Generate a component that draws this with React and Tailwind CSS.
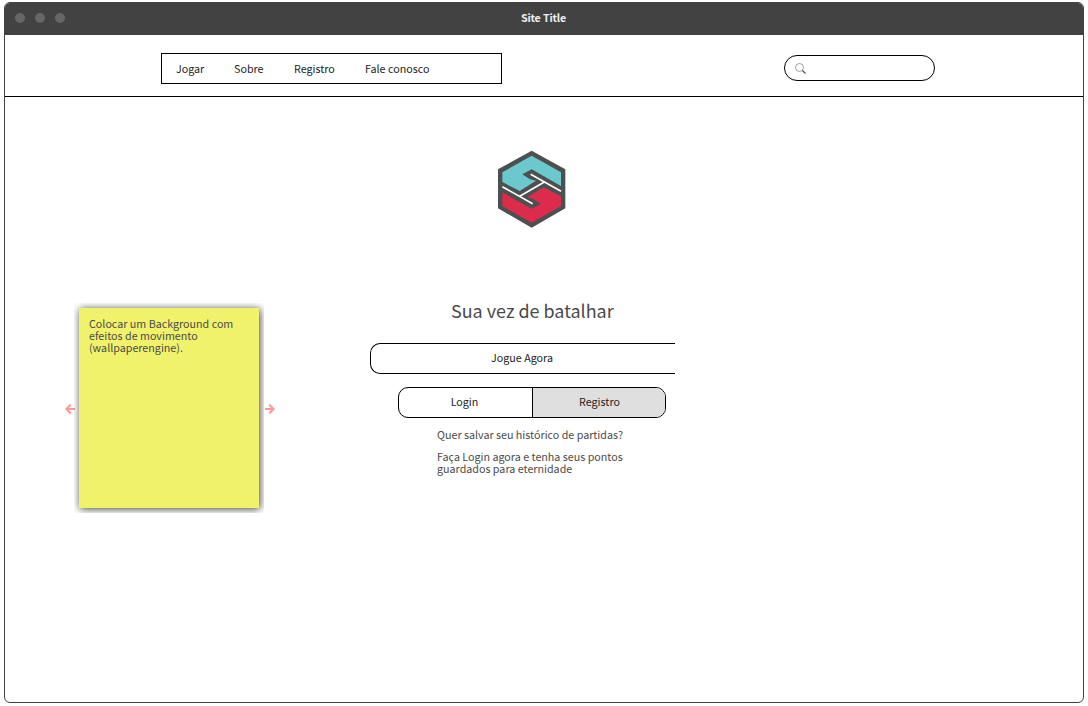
function Logo() {
  return (
    <svg className="block h-[78px] w-[68px]" viewBox="54 30 204 234" aria-hidden="true">
      <path d="M155 32 256 88V205L155 263 54 205V88Z" fill="#4d5050" />
      <path d="M155 47 243 97V138L155 88 127 103 150 118 168 122 119 153 67 126V97Z" fill="#6bc8cd" />
      <path d="M155 248 67 198V157L155 206 183 191 160 177 142 172 191 142 243 169V198Z" fill="#dc2b4b" />
      <path d="M67 140 158 191M152 103 243 154M119 169 193 126" fill="none" stroke="#fff" strokeWidth="5" />
    </svg>
  );
}

function Arrow({ className = "" }) {
  return (
    <svg className={`mt-[2px] block h-[10px] w-[10px] ${className}`} viewBox="0 0 10 10" fill="none" stroke="#ff9999" strokeWidth="2.2" aria-hidden="true">
      <path d="M10 5H1.5M5.8 .6 1.5 5 5.8 9.4" />
    </svg>
  );
}

const links = [
  ["Jogar", "w-[58px]"],
  ["Sobre", "w-[60px]"],
  ["Registro", "w-[71px]"],
  ["Fale conosco", "w-[80px]"],
];

export default function App() {
  return (
    <div className="h-[706px] w-[1088px] bg-white pt-[2px] pl-[4px] font-['Noto_Sans_CJK_SC',sans-serif] text-[10.72px] leading-[12px] text-[#4a4a4a]">
      <div className="flex h-[701px] w-[1080px] flex-col overflow-hidden rounded-[6px] border border-[#424242]">
        <div className="grid h-[32px] shrink-0 grid-cols-[1fr_auto_1fr] items-center bg-[#424242] pb-[3px]">
          <div className="flex gap-[10px] pl-[10.4px]">
            <span className="size-[10px] rounded-full bg-[#666]" />
            <span className="size-[10px] rounded-full bg-[#666]" />
            <span className="size-[10px] rounded-full bg-[#666]" />
          </div>
          <h1 className="pt-px pr-px font-bold tracking-[-0.18px] text-[#eee]">Site Title</h1>
        </div>

        <header className="flex h-[62px] shrink-0 items-start justify-between border-b border-black pt-[18px] pr-[148px] pl-[156px]">
          <nav className="flex h-[31px] w-[341px] items-center border border-black pl-[14px] text-[#222]">
            {links.map(([label, width]) => (
              <a key={label} className={`${width} whitespace-nowrap`}>{label}</a>
            ))}
          </nav>
          <div className="mt-[2px] flex h-[26px] w-[151px] items-center rounded-full border border-black pl-[9.5px]">
            <svg className="size-[11px]" viewBox="0 0 11 11" fill="none" stroke="#777" aria-hidden="true">
              <circle cx="4.5" cy="4.5" r="4" strokeWidth=".7" />
              <path d="m7.3 7.3 3.2 3.2" strokeWidth="1.1" stroke="#444" />
            </svg>
          </div>
        </header>

        <main className="flex flex-1 flex-col pt-[53px]">
          <div className="pl-[493px]"><Logo /></div>
          <div className="mt-[75px] flex items-start pl-[60px]">
            <aside className="flex items-center">
              <Arrow />
              <div className="ml-[-1px] h-[210px] w-[190px] overflow-hidden p-[5px]">
                <p className="h-[200px] w-[180px] bg-[#f1f26c] px-[10px] pt-[10px] shadow-[1px_1px_8px_rgba(0,0,0,0.75)]">
                  Colocar um Background com efeitos de movimento (wallpaperengine).
                </p>
              </div>
              <Arrow className="ml-px rotate-180" />
            </aside>

            <section className="ml-[95px] w-[305px]">
              <h2 className="mt-[-2px] pl-[81px] text-[17.95px] leading-[18px] whitespace-nowrap">Sua vez de batalhar</h2>
              <button className="mt-[24px] block h-[31px] w-[305px] rounded-l-[10px] border border-r-0 border-black pr-[2px] pb-px text-[#222]">Jogue Agora</button>
              <div className="mt-[13px] ml-[28px] flex h-[31px] w-[268px] overflow-hidden rounded-[10px] border border-black text-[#222]">
                <button className="w-[134px] border-r border-black pr-[2px] pb-px">Login</button>
                <button className="flex-1 bg-[#dfdfdf] pb-px pl-px">Registro</button>
              </div>
              <p className="mt-[11px] ml-[67px] w-[200px]">Quer salvar seu histórico de partidas?</p>
              <p className="mt-[10px] ml-[67px] w-[200px]">Faça Login agora e tenha seus pontos guardados para eternidade</p>
            </section>
          </div>
        </main>
      </div>
    </div>
  );
}
